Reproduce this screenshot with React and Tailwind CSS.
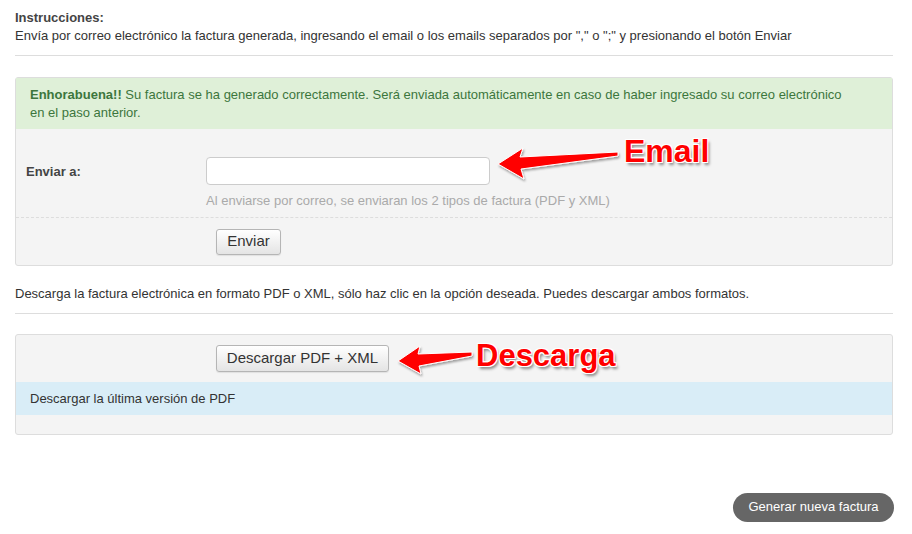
const Arrow = ({ className, w, h, d }) => (
  <svg className={className} width={w} height={h} viewBox={`0 0 ${w} ${h}`}>
    <defs>
      <filter id="arrowShadow" x="-10%" y="-30%" width="130%" height="180%">
        <feDropShadow dx="1" dy="2" stdDeviation="1" floodColor="#000" floodOpacity="0.35" />
      </filter>
    </defs>
    <path d={d} fill="#f00" stroke="#fff" strokeWidth="1" filter="url(#arrowShadow)" />
  </svg>
);

const calloutText =
  "absolute font-bold text-[#f00] leading-none [font-family:'Liberation_Sans',Arial,sans-serif] [text-shadow:-1px_-1px_0_#fff,1px_-1px_0_#fff,-1px_1px_0_#fff,1px_1px_0_#fff,0_-1px_0_#fff,0_1px_0_#fff,2px_3px_3px_rgba(0,0,0,0.45)]";

const btn =
  "rounded-[3px] border border-[#b5b5b5] bg-gradient-to-b from-white to-[#e4e4e4] text-[15px] text-[#333] shadow-[0_1px_1px_rgba(0,0,0,0.08)]";

export default function App() {
  return (
    <div className="relative min-h-[534px] w-[912px] bg-white pl-[15px] pr-[19px] pt-[9px] text-[13px] text-[#333] [font-family:'Liberation_Sans',Arial,sans-serif]">
      <div className="leading-[18px]">
        <div className="font-bold text-[#444]">Instrucciones:</div>
        <div>
          Envía por correo electrónico la factura generada, ingresando el email o los emails separados por "," o ";" y
          presionando el botón Enviar
        </div>
      </div>
      <div className="mt-[10px] border-t border-[#ddd]" />

      <div className="mt-[21px] rounded-[3px] border border-[#ddd] bg-[#f4f4f4]">
        <div className="bg-[#dff0d8] px-[14px] pt-[8px] pb-[7px] leading-[18px] text-[#3c763d]">
          <b>Enhorabuena!!</b> Su factura se ha generado correctamente. Será enviada automáticamente en caso de haber
          ingresado su correo electrónico
          <br />
          en el paso anterior.
        </div>
        <div className="flex pt-[28px]">
          <div className="w-[190px] shrink-0 pl-[10px] pt-[5px] font-bold text-[#444]">Enviar a:</div>
          <div>
            <input
              type="text"
              className="block h-[28px] w-[284px] rounded-[4px] border border-[#ccc] bg-white px-2 outline-none"
            />
            <div className="mt-[6px] text-[#aaa]">Al enviarse por correo, se enviaran los 2 tipos de factura (PDF y XML)</div>
          </div>
        </div>
        <div className="mt-[6px] border-t border-dashed border-[#ddd] pt-[11px] pb-[10px] pl-[200px]">
          <button className={`${btn} h-[26px] w-[65px]`}>Enviar</button>
        </div>
      </div>

      <div className="mt-[19px] leading-[18px]">
        Descarga la factura electrónica en formato PDF o XML, sólo haz clic en la opción deseada. Puedes descargar ambos
        formatos.
      </div>
      <div className="mt-[10px] border-t border-[#ddd]" />

      <div className="mt-[20px] rounded-[3px] border border-[#ddd] bg-[#f4f4f4]">
        <div className="pt-[10px] pb-[10px] pl-[200px]">
          <button className={`${btn} h-[27px] w-[173px]`}>Descargar PDF + XML</button>
        </div>
        <div className="bg-[#d9edf7] px-[14px] py-[7px] leading-[19px]">Descargar la última versión de PDF</div>
        <div className="h-[19px]" />
      </div>

      <div className="-mr-[1px] mt-[58px] flex justify-end">
        <button className="h-[29px] w-[161px] rounded-full bg-[#666] text-[13px] text-white">Generar nueva factura</button>
      </div>

      <Arrow
        className="absolute left-[494px] top-[143px]"
        w={130}
        h={40}
        d="M4 21 L29 5 L26 14 L124 9 L124 13 L27 26 L30 36 Z"
      />
      <div className={`${calloutText} left-[624px] top-[135px] text-[32px]`}>Email</div>

      <Arrow
        className="absolute left-[394px] top-[342px]"
        w={84}
        h={36}
        d="M4 19 L26 4 L24 12 L78 10 L78 14 L25 24 L27 32 Z"
      />
      <div className={`${calloutText} left-[476px] top-[340px] text-[31px]`}>Descarga</div>
    </div>
  );
}
